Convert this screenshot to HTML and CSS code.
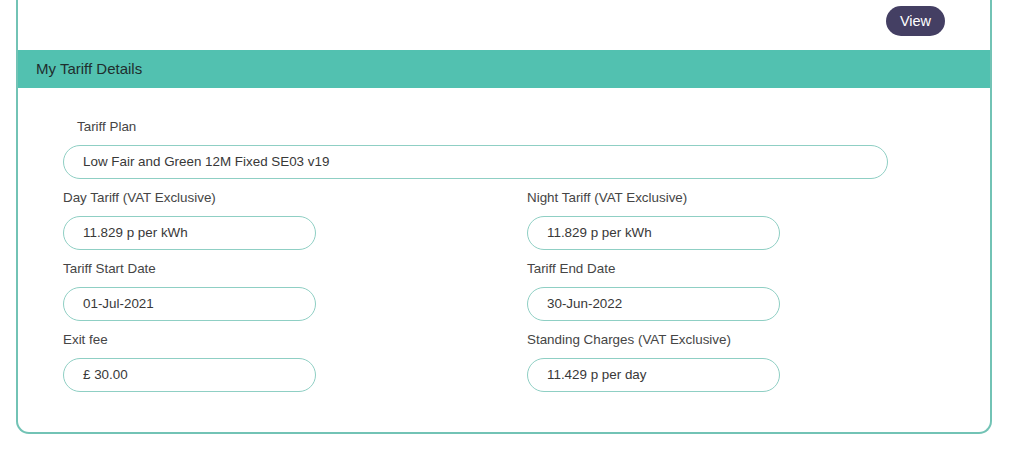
FILE: index.html
```html
<!DOCTYPE html>
<html lang="en">
<head>
<meta charset="utf-8">
<title>My Tariff Details</title>
<link rel="stylesheet" href="styles.css">
</head>
<body>
<div class="card">
  <div class="card-top">
    <button class="btn-view" type="button">View</button>
  </div>
  <div class="band">My Tariff Details</div>
  <div class="card-body">
    <div class="field field-plan">
      <label class="label label-indent">Tariff Plan</label>
      <div class="input input-wide">Low Fair and Green 12M Fixed SE03 v19</div>
    </div>
    <div class="grid">
      <div class="field">
        <label class="label">Day Tariff (VAT Exclusive)</label>
        <div class="input">11.829 p per kWh</div>
      </div>
      <div class="field">
        <label class="label">Night Tariff (VAT Exclusive)</label>
        <div class="input">11.829 p per kWh</div>
      </div>
      <div class="field">
        <label class="label">Tariff Start Date</label>
        <div class="input">01-Jul-2021</div>
      </div>
      <div class="field">
        <label class="label">Tariff End Date</label>
        <div class="input">30-Jun-2022</div>
      </div>
      <div class="field">
        <label class="label">Exit fee</label>
        <div class="input">£ 30.00</div>
      </div>
      <div class="field">
        <label class="label">Standing Charges (VAT Exclusive)</label>
        <div class="input">11.429 p per day</div>
      </div>
    </div>
  </div>
</div>
</body>
</html>
```
FILE: styles.css
```css
* { box-sizing: border-box; }
html, body { margin: 0; padding: 0; background: #ffffff; }
body {
  font-family: "Liberation Sans", Arial, sans-serif;
  color: #3a3a3a;
  width: 1024px;
  height: 461px;
  overflow: hidden;
}
.card {
  margin-left: 16px;
  width: 976px;
  border: 2px solid #72c3b5;
  border-top: none;
  border-radius: 0 0 13px 13px;
  background: #fff;
}
.card-top {
  height: 50px;
  display: flex;
  justify-content: flex-end;
  align-items: flex-start;
  padding-top: 6px;
  padding-right: 45px;
}
.btn-view {
  height: 30px;
  width: 59px;
  border: none;
  border-radius: 15px;
  background: #443f63;
  color: #ffffff;
  font-family: "Liberation Sans", Arial, sans-serif;
  font-size: 14.5px;
  padding: 0;
  cursor: pointer;
}
.band {
  height: 38px;
  background: #52c1b0;
  color: #1f2e2e;
  font-size: 15px;
  line-height: 38px;
  padding-left: 18px;
}
.card-body {
  padding: 30px 45px 40px 45px;
}
.field {
  display: flex;
  flex-direction: column;
  gap: 9px;
}
.field-plan { margin-bottom: 10px; }
.label {
  font-size: 13.4px;
  line-height: 18px;
  color: #454545;
}
.label-indent { padding-left: 14px; }
.input {
  height: 34px;
  width: 253px;
  border: 1px solid #8fcfc4;
  border-radius: 17px;
  padding-left: 19px;
  font-size: 13.4px;
  line-height: 32px;
  color: #383838;
}
.input-wide { width: 825px; }
.grid {
  display: grid;
  grid-template-columns: 464px 464px;
  row-gap: 10px;
}
```
